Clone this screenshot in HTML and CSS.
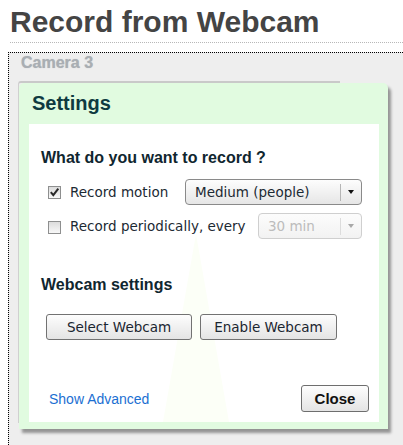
FILE: index.html
```html
<!DOCTYPE html>
<html>
<head>
<meta charset="utf-8">
<link rel="stylesheet" href="styles.css">
</head>
<body>
<h1 class="page-title">Record from Webcam</h1>
<div class="title-rule"></div>
<div class="camera-box">
  <div class="camera-title">Camera 3</div>
  <div class="camera-frame">
    <div class="dialog">
      <div class="dialog-head">Settings</div>
      <div class="dialog-body">
        <div class="section-title">What do you want to record ?</div>
        <div class="opt-row first">
          <span class="check">
            <svg width="13" height="13" viewBox="0 0 13 13"><path d="M2.8 6.2 L5.3 9.2 L10.3 2.6" fill="none" stroke="#2a2a2a" stroke-width="2"/></svg>
          </span>
          <span class="opt-label">Record motion</span>
          <span class="select wide">
            <span class="select-text">Medium (people)</span>
            <span class="select-sep"></span>
            <span class="select-arrow"></span>
          </span>
        </div>
        <div class="opt-row second">
          <span class="check"></span>
          <span class="opt-label">Record periodically, every</span>
          <span class="select narrow disabled">
            <span class="select-text">30 min</span>
            <span class="select-sep"></span>
            <span class="select-arrow"></span>
          </span>
        </div>
        <div class="section-title webcam">Webcam settings</div>
        <div class="btn-row">
          <button class="btn select-btn">Select Webcam</button>
          <button class="btn enable-btn">Enable Webcam</button>
        </div>
        <div class="dialog-foot">
          <a class="adv-link">Show Advanced</a>
          <button class="btn close-btn">Close</button>
        </div>
      </div>
    </div>
  </div>
</div>
</body>
</html>
```
FILE: styles.css
```css
html, body {
  margin: 0;
  padding: 0;
  background: #fff;
  overflow: hidden;
  height: 445px;
}
body {
  font-family: "Liberation Sans", Arial, sans-serif;
}
.page-title {
  margin: 0;
  padding: 5px 0 0 10px;
  font-size: 30px;
  line-height: 34px;
  font-weight: bold;
  color: #444;
}
.title-rule {
  margin: 3px 0 0 10px;
  border-top: 1px dotted #b8b8b8;
  height: 0;
}
.camera-box {
  margin: 9px 0 0 8px;
  border-top: 1px dotted #000;
  border-left: 1px dotted #000;
  background: #eee;
  height: 392px;
}
.camera-title {
  padding: 1px 0 0 12px;
  font-size: 16px;
  line-height: 18px;
  font-weight: bold;
  color: #a9aeb3;
  text-shadow: 0 0 1px #b8bcc0;
}
.camera-frame {
  position: relative;
  margin: 9px 0 0 9px;
  width: 321px;
  height: 340px;
  border-top: 2px solid #c9c9c9;
  border-left: 1px solid #d0d0d0;
  border-top-left-radius: 3px;
}
.dialog {
  position: absolute;
  top: 0;
  left: 0;
  width: 369px;
  height: 346px;
  background: #e1fbe0;
  border-radius: 5px 5px 0 0;
  box-shadow: 3px 4px 3px rgba(0,0,0,0.38);
  display: flex;
  flex-direction: column;
}
.dialog-head {
  height: 41px;
  line-height: 40px;
  padding-left: 13px;
  font-size: 20px;
  font-weight: bold;
  color: #0e3a40;
}
.dialog-body {
  position: relative;
  margin: 0 9px 7px 10px;
  height: 298px;
  box-sizing: border-box;
  padding: 25px 10px 10px 12px;
  background: #fff;
  display: flex;
  flex-direction: column;
  font-family: "DejaVu Sans", Verdana, sans-serif;
  font-size: 13.5px;
  color: #1c2a33;
}
.dialog-body::before {
  content: "";
  position: absolute;
  left: 134px;
  top: 110px;
  width: 66px;
  height: 188px;
  background: #fcfff7;
  clip-path: polygon(50% 0, 100% 100%, 0 100%);
}
.dialog-body > * {
  position: relative;
}
.section-title {
  font-family: "Liberation Sans", Arial, sans-serif;
  font-size: 16px;
  line-height: 18px;
  font-weight: bold;
  color: #10262f;
}
.section-title.webcam {
  margin-top: 37px;
}
.opt-row {
  display: flex;
  align-items: center;
  height: 26px;
  padding-left: 7px;
}
.opt-row.first { margin-top: 12px; }
.opt-row.second { margin-top: 8px; }
.check {
  width: 13px;
  height: 13px;
  box-sizing: border-box;
  border: 1px solid #8e8f8f;
  background: linear-gradient(#dcdcdc, #f8f8f8);
  display: inline-flex;
  margin-right: 9px;
  position: relative;
}
.check svg {
  position: absolute;
  left: -1px;
  top: -1px;
}
.opt-row.second .check { margin-top: 2px; }
.opt-label {
  white-space: nowrap;
  margin-right: 12px;
}
.opt-row.second .opt-label { margin-right: 10px; }
.select {
  height: 26px;
  box-sizing: border-box;
  border: 1px solid #8a8a8a;
  border-radius: 4px;
  background: linear-gradient(#fdfdfd, #e6e6e6);
  display: flex;
  align-items: center;
  position: relative;
  margin-left: auto;
  margin-right: 7px;
}
.select.wide { width: 177px; }
.select.narrow { width: 104px; }
.select-text {
  flex: 1;
  padding-left: 9px;
  white-space: nowrap;
}
.select-sep {
  width: 1px;
  height: 17px;
  background: #b5b5b5;
  margin-right: 7px;
}
.select-arrow {
  width: 0;
  height: 0;
  border-left: 3.5px solid transparent;
  border-right: 3.5px solid transparent;
  border-top: 4px solid #111;
  margin-right: 7px;
}
.select.disabled {
  border-color: #cfcfcf;
  background: linear-gradient(#fcfcfc, #f2f2f2);
  color: #bcbcbc;
}
.select.disabled .select-sep { background: #dcdcdc; }
.select.disabled .select-arrow { border-top-color: #a8a8a8; }
.btn-row {
  display: flex;
  gap: 8px;
  margin-top: 20px;
  padding-left: 5px;
}
.btn {
  font-family: "DejaVu Sans", Verdana, sans-serif;
  font-size: 13.5px;
  color: #1a2530;
  height: 26px;
  box-sizing: border-box;
  border: 1px solid #727272;
  border-radius: 3px;
  background: linear-gradient(#fdfdfd, #e4e4e4);
  padding: 0;
  margin: 0;
}
.select-btn { width: 146px; }
.enable-btn { width: 137px; }
.dialog-foot {
  margin-top: 45px;
  display: flex;
  align-items: center;
  justify-content: space-between;
  height: 27px;
}
.adv-link {
  font-family: "Liberation Sans", Arial, sans-serif;
  font-size: 14px;
  color: #1b6fd2;
  padding-left: 8px;
  padding-top: 1px;
}
.close-btn {
  width: 68px;
  height: 27px;
  font-family: "Liberation Sans", Arial, sans-serif;
  font-weight: bold;
  font-size: 15px;
  color: #111;
  border-color: #6e6e6e;
}
```
